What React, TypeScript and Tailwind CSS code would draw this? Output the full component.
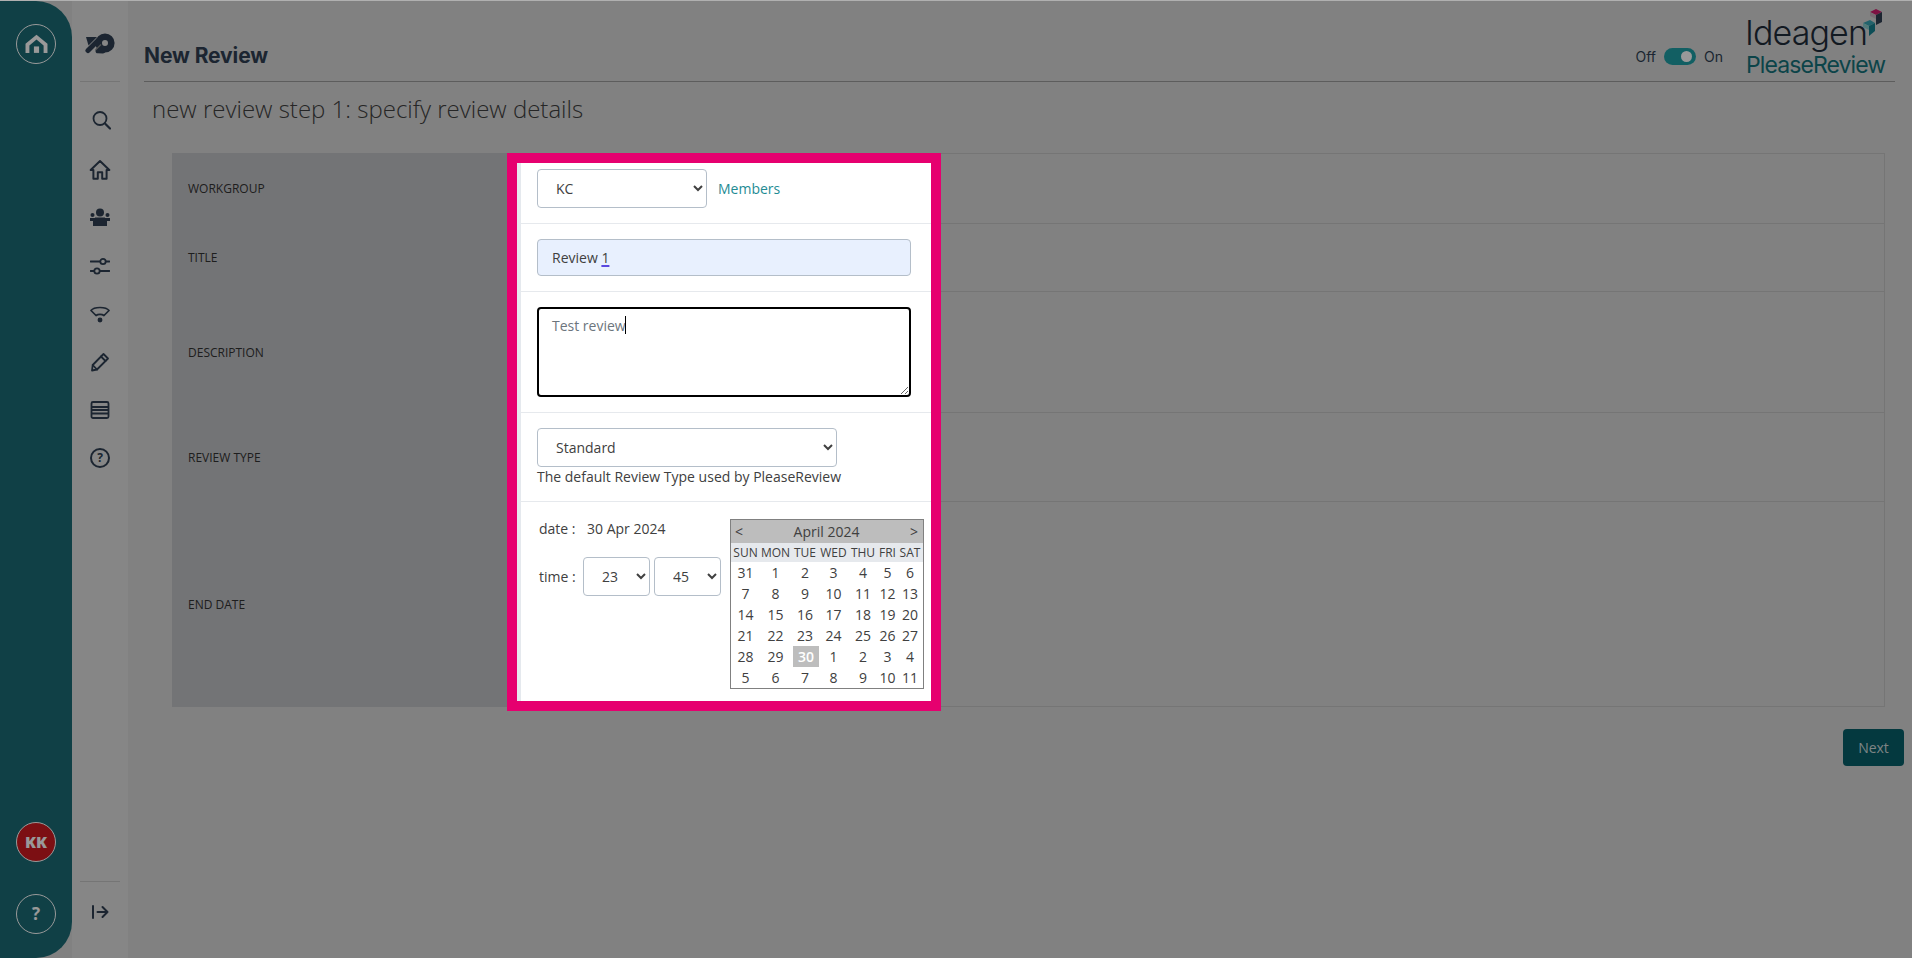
import React from "react";

const ink = "#2f3f52";
const sel = "bg-white border border-[#b4bec9] rounded-[4px] text-[14px] text-[#404040] pl-[14px] outline-none";
const days = ["SUN", "MON", "TUE", "WED", "THU", "FRI", "SAT"];
const dates = [31,1,2,3,4,5,6,7,8,9,10,11,12,13,14,15,16,17,18,19,20,21,22,23,24,25,26,27,28,29,30,1,2,3,4,5,6,7,8,9,10,11];
const cols = "grid grid-cols-[29px_31px_28px_29px_30px_19px_26px]";

function Nav({ children }: { children: React.ReactNode }) {
  return <div className="h-[48px] flex items-center justify-center">{children}</div>;
}

function Ico({ d, w = 20 }: { d: React.ReactNode; w?: number }) {
  return (
    <svg width={w} height={w} viewBox="0 0 20 20" fill="none" stroke={ink} strokeWidth="1.8" strokeLinejoin="round" strokeLinecap="round">
      {d}
    </svg>
  );
}

export default function App() {
  return (
    <div className="relative w-full h-screen overflow-hidden flex bg-[#d7d7d7] border-t border-[#b0b0b0]" style={{ fontFamily: '"Open Sans", sans-serif' }}>
      {/* rail */}
      <div className="w-[72px] shrink-0 h-full bg-[#1b6c76] rounded-r-[36px] flex flex-col items-center">
        <div className="mt-[23px] w-[40px] h-[40px] rounded-full border-[1.5px] border-[#fff] flex items-center justify-center">
          <svg width="31" height="31" viewBox="0 0 24 24" fill="#fff">
            <path d="M3.5 11.5 L12 4.5 L20.5 11.5 V18.5 H17.5 V12.8 L12 8.2 L6.5 12.8 V18.5 H3.5 Z" />
            <rect x="10" y="13.5" width="4" height="5" />
          </svg>
        </div>
        <div className="mt-auto w-[40px] h-[40px] rounded-full border-[1.5px] border-[#fff] bg-[#cf1a20] flex items-center justify-center text-white font-extrabold text-[16px]">KK</div>
        <div className="mt-[32px] mb-[24px] w-[40px] h-[40px] rounded-full border-[1.5px] border-[#fff] flex items-center justify-center text-white font-bold text-[17px]">?</div>
      </div>

      {/* icon column */}
      <div className="w-[56px] shrink-0 h-full bg-[#dfdfdf] flex flex-col items-center">
        <div className="w-[40px] h-[81px] shrink-0 border-b border-[#c4c4c4] flex items-center justify-center pt-[4px]">
          <svg width="30" height="21" viewBox="0 0 30 21" fill="none">
            <path d="M3 17.5 L13 7.5" stroke={ink} strokeWidth="5" strokeLinecap="round" />
            <path d="M1 4 H12 L3.5 12.5 Z" fill={ink} />
            <path d="M13 17.8 L18 18" stroke={ink} strokeWidth="5" strokeLinecap="round" />
            <circle cx="20" cy="10" r="6.3" stroke={ink} strokeWidth="6.6" />
            <path d="M10.5 17 L16 11.5" stroke="#8a8a8a" strokeWidth="1.2" />
          </svg>
        </div>
        <div className="pt-[14px] flex flex-col">
          <div className="mb-[2px] ml-[2px]">
            <Nav>
              <Ico w={20} d={<><circle cx="9" cy="8.5" r="6.5" /><path d="M14 13.5 L19 18.5" strokeWidth="2.2" /></>} />
            </Nav>
          </div>
          <Nav>
            <Ico w={22} d={<path d="M10 1.8 L1.5 10 H4 V18 H8 V12 H12 V18 H16 V10 H18.5 Z" />} />
          </Nav>
          <Nav>
            <svg width="20" height="20" viewBox="0 0 20 20" fill={ink}>
              <circle cx="10" cy="4.5" r="4" />
              <circle cx="2.5" cy="7" r="2" />
              <circle cx="17.5" cy="7" r="2" />
              <path d="M0 10 H5 V9.5 H15 V10 H20 V13 H17 V18 H3 V13 H0 Z" />
            </svg>
          </Nav>
          <Nav>
            <Ico w={20} d={<><path d="M0.5 5.5 H10" /><path d="M16 5.5 H19.5" /><circle cx="13" cy="5.5" r="2.7" /><path d="M0.5 15 H4" /><path d="M10 15 H19.5" /><circle cx="7" cy="15" r="2.7" /></>} />
          </Nav>
          <Nav>
            <svg width="20" height="20" viewBox="0 0 20 20" fill="none" stroke={ink} strokeWidth="1.7" strokeLinejoin="round">
              <path d="M1 6.5 C4 2.5 16 2.5 19 6.5 L14 11.5 C12 10 8 10 6 11.5 Z" />
              <circle cx="10" cy="16" r="1.6" fill={ink} />
            </svg>
          </Nav>
          <Nav>
            <Ico w={20} d={<><path d="M13.5 2 L18 6.5 L7 17.5 L2 18.5 L2.7 13 Z" /><path d="M11 4.5 L15.5 9" /><path d="M2.7 13 L7 17.5" /></>} />
          </Nav>
          <Nav>
            <Ico w={20} d={<><rect x="1.5" y="2" width="17" height="16" rx="1.5" /><path d="M2 7 H18 M2 10 H18 M2 13.5 H18" /></>} />
          </Nav>
          <Nav>
            <div className="w-[20px] h-[20px] rounded-full border-[2px] border-[#2f3f52] flex items-center justify-center text-[12px] font-bold text-[#2f3f52] leading-none">?</div>
          </Nav>
        </div>
        <div className="mt-auto w-[40px] h-[77px] border-t border-[#c4c4c4] flex items-start justify-center pt-[22px]">
          <svg width="18" height="16" viewBox="0 0 18 16" fill="none" stroke={ink} strokeWidth="2" strokeLinecap="round" strokeLinejoin="round">
            <path d="M2 2 V14" />
            <path d="M6.5 8 H16.5 M11.5 3 L16.5 8 L11.5 13" />
          </svg>
        </div>
      </div>

      {/* main */}
      <div className="flex-1 min-w-0 flex flex-col">
        {/* header */}
        <div className="ml-[16px] mr-[17px] h-[81px] shrink-0 border-b border-[#9c9c9c] flex items-end justify-between">
          <h1 className="text-[21px] font-bold text-[#2f3f52] mb-[11px] tracking-[-0.1px] leading-[28px]" style={{ fontFamily: '"Inter", sans-serif' }}>New Review</h1>
          <div className="flex items-end mr-[11px]">
            <div className="flex items-center text-[14px] text-[#2f3f52] mb-[14px] mr-[24px]" style={{ fontFamily: '"Inter", sans-serif' }}>
              <span>Off</span>
              <span className="mx-[8px] w-[32px] h-[17px] rounded-full bg-[#1f9fa6] flex items-center justify-end pr-[4px]">
                <span className="w-[11px] h-[11px] rounded-full bg-white" />
              </span>
              <span>On</span>
            </div>
            <div className="relative w-[137px] h-[76px] flex flex-col items-start justify-end leading-none" style={{ fontFamily: '"Inter", sans-serif' }}>
              <span className="text-[34px] font-light text-[#1f2c3a] tracking-[-0.9px] leading-[36px] -ml-[2px]">Ideagen</span>
              <span className="text-[23px] font-normal text-[#14727a] tracking-[-0.9px] leading-[28px] mb-[2px] -ml-[1px]">PleaseReview</span>
              <svg className="absolute right-[0px] top-[4px]" width="21" height="28" viewBox="0 0 21 28">
                <polygon points="7,3 13,0 19,3 13,6" fill="#d01c6e" />
                <polygon points="13,6 19,3 19,13 13,16" fill="#2f3f52" />
                <polygon points="7,3 13,6 13,10 7,7" fill="#c9b6c2" />
                <polygon points="0,14 7,11 12,14 6,17" fill="#3aa5b4" />
                <polygon points="6,17 12,14 12,22 6,27" fill="#14808f" />
                <polygon points="0,14 6,17 6,21 0,18" fill="#88cccc" />
              </svg>
            </div>
          </div>
        </div>

        <h2 className="ml-[24px] mt-[10px] h-[61px] text-[24px] font-light text-[#404040] leading-[33px]">new review step 1: specify review details</h2>

        {/* form */}
        <div className="ml-[44px] mr-[27px] flex h-[554px] shrink-0 text-[12px] text-[#333]">
          <div className="w-[345px] shrink-0 bg-[#c0c1c5] flex flex-col pl-[16px] text-[12px]">
            <div className="h-[70px] flex items-center pt-[1px]">WORKGROUP</div>
            <div className="h-[68px] flex items-center pt-[1px]">TITLE</div>
            <div className="h-[121px] flex items-center pt-[2px]">DESCRIPTION</div>
            <div className="h-[89px] flex items-center pt-[2px]">REVIEW TYPE</div>
            <div className="h-[206px] flex items-center pt-[1px]">END DATE</div>
          </div>

          <div className="relative z-20 w-[414px] shrink-0 mt-[10px] mb-[6px] bg-white border-l-[4px] border-[#e5e9ee] outline-[10px] outline-solid outline-[#e6006f] flex flex-col text-[14px] text-[#404040]">
            <div className="h-[61px] border-b border-[#e6e9ed] pl-[16px] pt-[6px] flex items-start">
              <select defaultValue="KC" className={`${sel} w-[170px] h-[39px]`}>
                <option>KC</option>
              </select>
              <span className="ml-[11px] mt-[10px] text-[#1f8c94] leading-[19px]">Members</span>
            </div>
            <div className="h-[68px] border-b border-[#e6e9ed] pl-[16px] pt-[15px]">
              <div className="w-[374px] h-[37px] bg-[#e8f0fe] border border-[#b4bec9] rounded-[4px] pl-[14px] flex items-center">
                <span>Review&nbsp;</span>
                <span className="underline decoration-[#5a48e0] decoration-[1.5px] underline-offset-[2px]">1</span>
              </div>
            </div>
            <div className="h-[121px] border-b border-[#e6e9ed] pl-[16px] pt-[15px]">
              <div className="relative w-[374px] h-[90px]">
                <textarea
                  defaultValue="Test review"
                  className="block w-full h-full border-[2px] border-black rounded-[4px] pl-[13px] pt-[6px] text-[14px] text-[#6c757d] outline-none bg-white"
                />
                <span className="absolute left-[88px] top-[9px] w-[1px] h-[18px] bg-black" />
              </div>
            </div>
            <div className="h-[89px] border-b border-[#e6e9ed] pl-[16px] pt-[15px]">
              <select defaultValue="Standard" className={`${sel} block w-[300px] h-[39px]`}>
                <option>Standard</option>
              </select>
              <div className="leading-[20px]">The default Review Type used by PleaseReview</div>
            </div>
            <div className="flex-1 pl-[18px] pt-[17px] flex items-start">
              <div className="w-[191px] shrink-0">
                <div className="flex h-[20px] items-center -mt-[1px]">
                  <span className="w-[48px]">date :</span>
                  <span>30 Apr 2024</span>
                </div>
                <div className="flex items-center mt-[19px]">
                  <span className="w-[44px]">time :</span>
                  <select defaultValue="23" className={`${sel} w-[67px] h-[39px]`}>
                    <option>23</option>
                  </select>
                  <select defaultValue="45" className={`${sel} w-[67px] h-[39px] ml-[4px]`}>
                    <option>45</option>
                  </select>
                </div>
              </div>
              <div className="w-[194px] shrink-0 border border-[#808080]">
                <div className="h-[23px] bg-[#bdbdbd] flex items-center justify-between px-[5px]">
                  <span className="-ml-[1px]">&lt;</span>
                  <span>April 2024</span>
                  <span>&gt;</span>
                </div>
                <div className={`${cols} h-[19px] bg-[#e6e9ed] text-[12px] leading-[19px] text-center`}>
                  {days.map((d) => (
                    <span key={d}>{d}</span>
                  ))}
                </div>
                <div className={`${cols} text-center leading-[21px]`}>
                  {dates.map((n, i) => (
                    <span key={i} className={i === 30 ? "bg-[#bdbdbd] text-white font-semibold ml-[2px]" : ""}>
                      {n}
                    </span>
                  ))}
                </div>
              </div>
            </div>
          </div>

          <div className="flex-1 min-w-0 flex flex-col border-t border-r border-[#c4c4c4]">
            <div className="h-[70px] border-b border-[#c4c4c4]" />
            <div className="h-[68px] border-b border-[#c4c4c4]" />
            <div className="h-[121px] border-b border-[#c4c4c4]" />
            <div className="h-[89px] border-b border-[#c4c4c4]" />
            <div className="flex-1 border-b border-[#c4c4c4]" />
          </div>
        </div>

        <div className="flex justify-end mr-[8px] mt-[22px]">
          <button className="w-[61px] h-[37px] rounded-[4px] bg-[#075f69] text-[#d0dcdd] text-[14px]">Next</button>
        </div>
      </div>

      {/* dimming layer */}
      <div className="absolute inset-0 z-10 bg-black/40" />
    </div>
  );
}
